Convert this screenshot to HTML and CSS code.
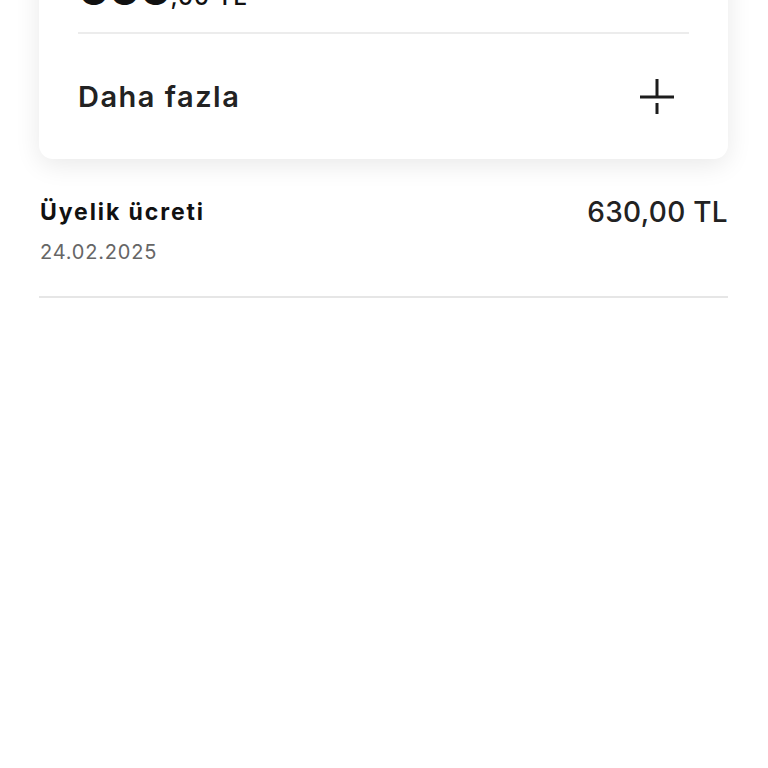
FILE: index.html
```html
<!DOCTYPE html>
<html lang="tr">
<head>
<meta charset="utf-8">
<link rel="stylesheet" href="styles.css">
</head>
<body>
<div class="page">
  <section class="card">
    <div class="amount"><span class="amount-main">000</span><span class="amount-rest">,00 TL</span></div>
    <div class="card-divider"></div>
    <div class="more-row">
      <span class="more-label">Daha fazla</span>
      <svg class="plus" width="36" height="36" viewBox="0 0 36 36" aria-hidden="true">
        <path d="M18 0 V19.5 M1 18 H35 M18 24 V35" stroke="#1c1c1c" stroke-width="3" fill="none"/>
      </svg>
    </div>
  </section>
  <div class="tx">
    <div class="tx-left">
      <div class="tx-title">Üyelik ücreti</div>
      <div class="tx-date">24.02.2025</div>
    </div>
    <div class="tx-amount">630,00 TL</div>
  </div>
</div>
</body>
</html>
```
FILE: styles.css
```css
* { box-sizing: border-box; }
html, body { margin: 0; padding: 0; background: #fff; }
body {
  font-family: "Inter", "Noto Sans", sans-serif;
  color: #1c1c1c;
  overflow: hidden;
}
.page {
  padding: 0 40px 0 39px;
}
.card {
  margin-top: -60px;
  background: #fff;
  border-radius: 14px;
  box-shadow: 0 6px 26px rgba(0, 0, 0, 0.09);
  padding: 0 39px;
}
.amount {
  display: flex;
  align-items: baseline;
  padding-top: 25px;
  height: 71px;
  line-height: 46px;
}
.amount-main {
  font-size: 46px;
  font-weight: 800;
  color: #111;
  letter-spacing: -1px;
}
.amount-rest {
  font-size: 24px;
  font-weight: 500;
  color: #111;
  letter-spacing: 0.6px;
}
.card-divider {
  height: 2px;
  background: #ececec;
  margin-top: 21px;
}
.more-row {
  height: 125px;
  display: flex;
  align-items: center;
  justify-content: space-between;
}
.more-label {
  font-size: 29px;
  font-weight: 600;
  color: #222;
  letter-spacing: 1.5px;
}
.plus {
  margin-right: 14px;
}
.tx {
  display: flex;
  justify-content: space-between;
  align-items: flex-start;
  padding-top: 38px;
  padding-left: 1px;
  height: 139px;
  border-bottom: 2px solid #e6e6e6;
}
.tx-title {
  font-size: 23px;
  font-weight: 700;
  color: #111;
  line-height: 30px;
  letter-spacing: 1.9px;
}
.tx-date {
  font-size: 20px;
  color: #666;
  line-height: 26px;
  margin-top: 12px;
  letter-spacing: 0.8px;
}
.tx-amount {
  font-size: 28px;
  font-weight: 500;
  color: #222;
  line-height: 30px;
  letter-spacing: 0.3px;
}
```
